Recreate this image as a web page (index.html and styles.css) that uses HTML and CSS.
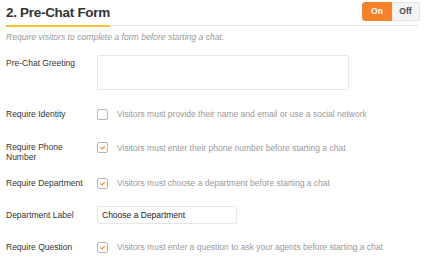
FILE: index.html
```html
<!DOCTYPE html>
<html lang="en">
<head>
    <meta charset="UTF-8">
    <title>Pre-Chat Form</title>
    <link rel="stylesheet" href="styles.css">
</head>
<body>
    <div class="panel">
        <div class="panel-head">
            <h2 class="panel-title">2. Pre-Chat Form</h2>
            <div class="toggle">
                <span class="toggle-btn active">On</span>
                <span class="toggle-btn">Off</span>
            </div>
        </div>
        <p class="panel-desc">Require visitors to complete a form before starting a chat.</p>

        <div class="form">
            <div class="row row-top">
                <label class="row-label">Pre-Chat Greeting</label>
                <div class="textarea"></div>
            </div>

            <div class="row">
                <label class="row-label">Require Identity</label>
                <div class="check-line">
                    <span class="check"></span>
                    <span class="check-text">Visitors must provide their name and email or use a social network</span>
                </div>
            </div>

            <div class="row row-tall">
                <label class="row-label">Require Phone<br>Number</label>
                <div class="check-line">
                    <span class="check checked"><svg viewBox="0 0 11 11" width="11" height="11"><path d="M3.2 5.7 L4.9 7.2 L7.9 4.2" fill="none" stroke="#f58220" stroke-width="1.3" stroke-linecap="round" stroke-linejoin="round"/></svg></span>
                    <span class="check-text">Visitors must enter their phone number before starting a chat</span>
                </div>
            </div>

            <div class="row">
                <label class="row-label">Require Department</label>
                <div class="check-line">
                    <span class="check checked"><svg viewBox="0 0 11 11" width="11" height="11"><path d="M3.2 5.7 L4.9 7.2 L7.9 4.2" fill="none" stroke="#f58220" stroke-width="1.3" stroke-linecap="round" stroke-linejoin="round"/></svg></span>
                    <span class="check-text">Visitors must choose a department before starting a chat</span>
                </div>
            </div>

            <div class="row">
                <label class="row-label">Department Label</label>
                <div class="input">Choose a Department</div>
            </div>

            <div class="row">
                <label class="row-label">Require Question</label>
                <div class="check-line">
                    <span class="check checked"><svg viewBox="0 0 11 11" width="11" height="11"><path d="M3.2 5.7 L4.9 7.2 L7.9 4.2" fill="none" stroke="#f58220" stroke-width="1.3" stroke-linecap="round" stroke-linejoin="round"/></svg></span>
                    <span class="check-text">Visitors must enter a question to ask your agents before starting a chat</span>
                </div>
            </div>
        </div>
    </div>
</body>
</html>
```

FILE: styles.css
```css
body {
    margin: 0;
    background-color: #fff;
    font-family: 'Liberation Sans', Arial, sans-serif;
    color: #333;
}

.panel {
    width: 412px;
    padding: 2px 8px 0 6px;
}

.panel-head {
    display: flex;
    justify-content: space-between;
    align-items: flex-start;
    border-bottom: 1px solid #e6e6e6;
    height: 23px;
}

.panel-title {
    margin: 0;
    padding-top: 2px;
    font-size: 13.5px;
    line-height: 17px;
    letter-spacing: -0.3px;
    font-weight: bold;
    color: #333;
    height: 21px;
    border-bottom: 2px solid #f5c12e;
}

.toggle {
    display: flex;
    margin-right: -2px;
}

.toggle-btn {
    width: 27px;
    height: 17px;
    line-height: 17px;
    text-align: center;
    font-size: 8.5px;
    font-weight: bold;
    color: #444;
    background-color: #f4f4f4;
    border: 1px solid #e2e2e2;
    border-left: none;
    border-radius: 0 3px 3px 0;
}

.toggle-btn.active {
    width: 28px;
    color: #fff;
    background-color: #f5822a;
    border: 1px solid #f5822a;
    border-radius: 3px 0 0 3px;
}

.panel-desc {
    margin: 5px 0 0;
    font-size: 8.6px;
    font-style: italic;
    color: #999;
    line-height: 12px;
}

.form {
    display: flex;
    flex-direction: column;
    gap: 10px;
    margin-top: 12px;
}

.row {
    display: grid;
    grid-template-columns: 91px 1fr;
    align-items: center;
    min-height: 22px;
}

.row-top {
    align-items: start;
    margin-bottom: 3px;
}

.row-top .row-label {
    padding-top: 3px;
}

.row-tall {
    align-items: start;
    margin-top: 2px;
}

.row-tall .row-label {
    padding-top: 5px;
    line-height: 10px;
}

.row-tall .check-line {
    padding-top: 5px;
}

.row-label {
    font-size: 8.5px;
    line-height: 11px;
    color: #333;
}

.textarea {
    width: 250px;
    height: 33px;
    border: 1px solid #e6e6e6;
    border-radius: 2px;
}

.input {
    width: 134px;
    height: 16px;
    line-height: 16px;
    padding-left: 4px;
    border: 1px solid #e6e6e6;
    border-radius: 2px;
    font-size: 8.5px;
    color: #222;
}

.check-line {
    display: flex;
    align-items: center;
    gap: 9px;
}

.check {
    width: 9px;
    height: 9px;
    border: 1px solid #b5b5b5;
    border-radius: 2px;
    display: flex;
    align-items: center;
    justify-content: center;
    flex-shrink: 0;
    background-color: #fff;
}

.check svg {
    display: block;
}

.check-text {
    font-size: 8.5px;
    color: #999;
    white-space: nowrap;
}
```
